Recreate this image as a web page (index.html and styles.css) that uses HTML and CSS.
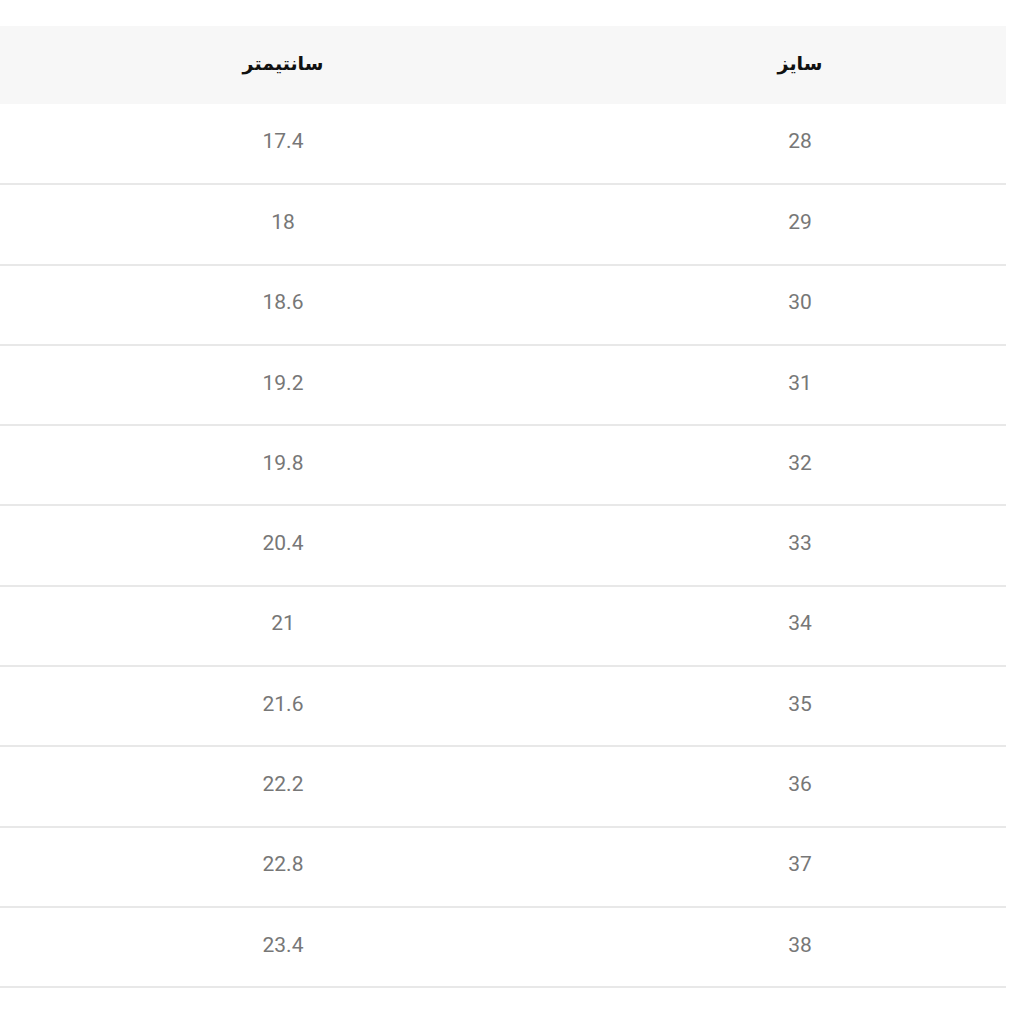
FILE: index.html
```html
<!DOCTYPE html>
<html lang="fa" dir="rtl">
<head>
<meta charset="utf-8">
<link rel="stylesheet" href="styles.css">
</head>
<body>
<div class="wrap">
<table class="sizes">
<thead>
<tr><th class="c-size">سایز</th><th class="c-cm">سانتیمتر</th></tr>
</thead>
<tbody>
<tr><td>28</td><td>17.4</td></tr>
<tr><td>29</td><td>18</td></tr>
<tr><td>30</td><td>18.6</td></tr>
<tr><td>31</td><td>19.2</td></tr>
<tr><td>32</td><td>19.8</td></tr>
<tr><td>33</td><td>20.4</td></tr>
<tr><td>34</td><td>21</td></tr>
<tr><td>35</td><td>21.6</td></tr>
<tr><td>36</td><td>22.2</td></tr>
<tr><td>37</td><td>22.8</td></tr>
<tr><td>38</td><td>23.4</td></tr>
</tbody>
</table>
</div>
</body>
</html>
```
FILE: styles.css
```css
html, body {
  margin: 0;
  padding: 0;
  background: #ffffff;
}
body {
  overflow: hidden;
}
.wrap {
  padding-top: 26px;
  width: 1006px;
  margin-right: 18px;
  margin-left: 0;
}
.sizes {
  border-collapse: collapse;
  width: 1034px;
  table-layout: fixed;
}
.c-size { width: 412px; }
.c-cm { width: 622px; }
.sizes th {
  background: #f7f7f7;
  height: 78px;
  padding: 0 0 4px 0;
  box-sizing: border-box;
  font-family: "DejaVu Sans", sans-serif;
  font-weight: bold;
  font-size: 19px;
  color: #111;
  text-align: center;
  vertical-align: middle;
}
.sizes td {
  height: 80.3px;
  padding: 0 0 5px 0;
  box-sizing: border-box;
  border-bottom: 2px solid #e8e8e8;
  font-family: Roboto, sans-serif;
  font-size: 21px;
  color: #777777;
  text-align: center;
  vertical-align: middle;
}
```
